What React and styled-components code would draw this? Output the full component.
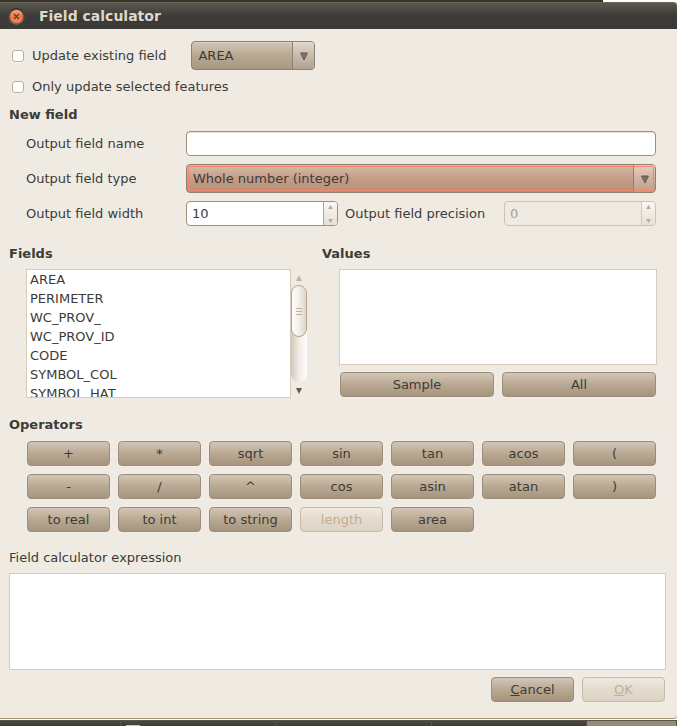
import React from "react";
import styled, { createGlobalStyle, css } from "styled-components";

const ink = "#3c3b37";
const paper = "#efebe3";
const edge = "#a09078";
const paleEdge = "#d6ccb9";

const GlobalStyle = createGlobalStyle`
  *, *::before, *::after { box-sizing: border-box; }
  body {
    margin: 0;
    background: ${paper};
    color: ${ink};
    font: 13px/16px "DejaVu Sans", sans-serif;
  }
  button, input, select, textarea {
    margin: 0;
    font: inherit;
    color: inherit;
  }
`;

const Screen = styled.div`
  display: flex;
  flex-direction: column;
  min-height: 100vh;
`;

const Backdrop = styled.div`
  height: 2px;
  background: linear-gradient(to right, #34352f 89%, #ffffff 89%);
`;

const TitleBar = styled.header`
  display: flex;
  align-items: center;
  gap: 14px;
  height: 27px;
  padding-left: 8px;
  border-top: 1px solid #6d6454;
  border-top-right-radius: 4px;
  background: linear-gradient(#5a5952, #3c3b37 50%, #3b3a36);
`;

const CloseButton = styled.button`
  display: flex;
  width: 17px;
  height: 17px;
  padding: 0;
  border: 0;
  background: none;
`;

const Title = styled.h1`
  margin: 0;
  font-size: 14px;
  line-height: 16px;
  color: #dfd8c8;
`;

const Body = styled.main`
  display: flex;
  flex: 1;
  flex-direction: column;
  padding: 12px 11px 16px 9px;
  border-bottom: 1px solid #a3966f;
  border-bottom-right-radius: 4px;
`;

const CheckRow = styled.div`
  display: flex;
  align-items: center;
  margin-bottom: 9px;
`;

const CheckLabel = styled.label`
  display: flex;
  align-items: center;
  gap: 8px;
  padding-left: 3px;
`;

const CheckBox = styled.input`
  appearance: none;
  width: 12px;
  height: 12px;
  border: 1px solid #bcae98;
  border-radius: 3px;
  background: #ffffff;
  box-shadow: 0 1px 0 #f8f5f0;
`;

const Heading = styled.h2`
  margin: ${(p) => (p.$first ? "3px" : "0")} 0 ${(p) => (p.$tight ? "7px" : "8px")};
  font-size: 13px;
  line-height: 16px;
`;

const FormGrid = styled.div`
  display: grid;
  grid-template-columns: 160px 1fr 166px 1fr;
  align-items: center;
  row-gap: 8px;
  margin: 0 10px 20px 17px;
`;

const FieldLabel = styled.label`
  padding-left: ${(p) => (p.$inner ? "7px" : "0")};
`;

const TextInput = styled.input`
  grid-column: span 3;
  width: 100%;
  height: 25px;
  padding: 0 6px;
  border: 1px solid ${edge};
  border-radius: 4px;
  background: #ffffff;
  box-shadow: inset 0 1px 0 #e6e1d9;
`;

const wideCombo = css`
  grid-column: span 3;
  background: linear-gradient(#dbb9a9, #c49d88 50%, #b98f76);
  outline: 1px solid #f4866c;
  outline-offset: -3px;
`;

const compactCombo = css`
  width: 124px;
  margin-left: 25px;
  background: linear-gradient(#d2c6b7, #b8a892 50%, #a89680);
  box-shadow: inset 0 1px 0 #ddd2c4;
`;

const ComboBox = styled.div`
  display: grid;
  grid-template-columns: 1fr 22px;
  height: 29px;
  border: 1px solid #8f8170;
  border-radius: 4px;
  ${(p) => (p.$wide ? wideCombo : compactCombo)}
`;

const ComboSelect = styled.select`
  appearance: none;
  grid-area: 1 / 1 / 2 / 3;
  min-width: 0;
  padding: 0 22px 0 6px;
  border: 0;
  background: transparent;
  outline: 0;
`;

const ComboArrow = styled.span`
  display: flex;
  grid-area: 1 / 2;
  align-items: center;
  justify-content: center;
  padding-top: 2px;
  border-left: 1px solid #8f8170;
  background: linear-gradient(rgba(255, 255, 255, 0.3), rgba(255, 255, 255, 0.12));
  pointer-events: none;
`;

const SpinBox = styled.div`
  display: grid;
  grid-template-columns: 1fr 14px;
  height: 25px;
  border: 1px solid ${(p) => (p.$off ? "#cfc3ae" : edge)};
  border-radius: 4px;
  background: ${(p) => (p.$off ? paper : "#ffffff")};
  overflow: hidden;
`;

const SpinInput = styled.input`
  appearance: textfield;
  min-width: 0;
  padding: 0 5px;
  border: 0;
  background: transparent;
  &::-webkit-inner-spin-button { appearance: none; margin: 0; }
  &:disabled { color: #a5a199; }
`;

const Steppers = styled.div`
  display: flex;
  flex-direction: column;
  justify-content: space-between;
  padding: 3px 0 2px;
  border-left: 1px solid ${(p) => (p.$off ? "#d3c8b6" : "#b5a78f")};
  background: linear-gradient(#faf8f5, #e7e0d5);
`;

const Stepper = styled.button`
  display: flex;
  justify-content: center;
  padding: 0;
  border: 0;
  background: none;
  color: #b9ab97;
  &:disabled { color: #b9ab97; }
`;

const Lists = styled.div`
  display: grid;
  grid-template-columns: 298fr 335fr;
  column-gap: 15px;
  margin: 0 9px 19px 0;
`;

const Column = styled.section`
  display: flex;
  flex-direction: column;
`;

const ListArea = styled.div`
  display: flex;
  height: 129px;
  margin-left: 17px;
`;

const List = styled.ul`
  flex: 1;
  margin: 0;
  padding: 0 3px;
  border: 1px solid ${paleEdge};
  background: #ffffff;
  list-style: none;
  overflow: hidden;
`;

const ListItem = styled.li`
  line-height: 19px;
`;

const ValueList = styled(List)`
  margin-left: 17px;
`;

const ScrollBar = styled.div`
  display: flex;
  flex-direction: column;
  width: 16px;
`;

const ScrollButton = styled.button`
  display: flex;
  align-items: center;
  justify-content: center;
  height: 16px;
  padding: 1px 0 0;
  border: 0;
  background: none;
  color: ${(p) => (p.disabled ? "#c2b49f" : "#5f5b53")};
`;

const Trough = styled.div`
  flex: 1;
  border-radius: 8px;
  background: linear-gradient(to right, #d2c8ba, #f0ece6 50%, #ffffff);
`;

const Thumb = styled.div`
  display: flex;
  flex-direction: column;
  align-items: center;
  justify-content: center;
  gap: 2px;
  height: 52px;
  border: 1px solid #b5a58c;
  border-radius: 8px;
  background: linear-gradient(to right, #ffffff, #f3efea 45%, #dfd6c9);
`;

const Grip = styled.span`
  width: 6px;
  height: 1px;
  background: #bfb19c;
`;

const ValueButtons = styled.div`
  display: grid;
  grid-template-columns: 1fr 1fr;
  gap: 8px;
  margin: 7px 1px 1px 18px;
`;

const offButton = css`
  border-color: #c5b8a5;
  background: linear-gradient(#efe9e0, #e4dbce 50%, #ddd3c5);
  color: #bfae94;
`;

const PushButton = styled.button`
  height: 25px;
  padding: 0 4px;
  border: 1px solid #9c8c77;
  border-radius: 4px;
  background: linear-gradient(#d2c6b7, #b9a993 50%, #a6947d);
  box-shadow: 0 0 0 1px #f2eee7;
  line-height: 16px;
  &:disabled { ${offButton} }
`;

const Operators = styled.div`
  display: grid;
  grid-template-columns: repeat(7, 1fr);
  gap: 8px;
  margin: 0 10px 18px 18px;
`;

const ExpressionLabel = styled.label`
  margin-bottom: 7px;
`;

const Expression = styled.textarea`
  flex: 1;
  min-height: 97px;
  padding: 4px;
  border: 1px solid ${paleEdge};
  background: #ffffff;
  resize: none;
  outline: 0;
`;

const DialogActions = styled.footer`
  display: grid;
  grid-template-columns: 83px 83px;
  gap: 8px;
  justify-content: end;
  margin: 7px 1px 0 0;
`;

const TaskBar = styled.div`
  display: grid;
  grid-template-columns: 121fr 155fr 156fr 155fr 90fr;
  height: 7px;
  border-top: 1px solid #fbf9f5;
  background: #3f3e39;
`;

const Task = styled.span`
  display: flex;
  align-items: flex-end;
  padding-left: 5px;
  border-top: 1px solid #55534c;
  border-right: 1px solid #57554e;
  border-top-right-radius: 2px;
  background: ${(p) => (p.$active ? "#9a8a74" : "linear-gradient(#4a4943, #3d3c37)")};
`;

const TaskIcon = styled.span`
  width: 14px;
  height: 1px;
  background: #c9c7c2;
`;

const CloseIcon = () => (
  <svg width="17" height="17" viewBox="0 0 17 17" aria-hidden="true">
    <defs>
      <linearGradient id="closeFill" x1="0" y1="0" x2="0" y2="1">
        <stop offset="0" stopColor="#f9a583" />
        <stop offset="0.5" stopColor="#f07746" />
        <stop offset="1" stopColor="#f58a58" />
      </linearGradient>
      <linearGradient id="closeRing" x1="0" y1="0" x2="0" y2="1">
        <stop offset="0" stopColor="#24231f" />
        <stop offset="1" stopColor="#77756d" />
      </linearGradient>
    </defs>
    <circle cx="8.5" cy="8.5" r="8.2" fill="url(#closeRing)" />
    <circle cx="8.5" cy="8.5" r="6.9" fill="url(#closeFill)" stroke="#7d3a24" strokeWidth="0.6" />
    <path d="M6 6l5 5M11 6l-5 5" stroke="#5b3a2c" strokeWidth="1.1" />
  </svg>
);

const ComboIcon = () => (
  <svg width="8" height="9" viewBox="0 0 8 9" aria-hidden="true">
    <path d="M0.6 1h6.8L4 8z" fill="#7e7568" stroke="#5d574e" />
  </svg>
);

const Arrow = ({ down, small }) => (
  <svg width={small ? 5 : 6} height={small ? 4 : 6} viewBox="0 0 6 6" preserveAspectRatio="none" aria-hidden="true">
    <path d={down ? "M0 0h6L3 6z" : "M0 6h6L3 0z"} fill="currentColor" />
  </svg>
);

const Spin = ({ id, value, disabled }) => (
  <SpinBox $off={disabled}>
    <SpinInput id={id} type="number" defaultValue={value} disabled={disabled} />
    <Steppers $off={disabled}>
      <Stepper type="button" aria-label="Increase" disabled={disabled}>
        <Arrow small />
      </Stepper>
      <Stepper type="button" aria-label="Decrease" disabled={disabled}>
        <Arrow small down />
      </Stepper>
    </Steppers>
  </SpinBox>
);

const fields = ["AREA", "PERIMETER", "WC_PROV_", "WC_PROV_ID", "CODE", "SYMBOL_COL", "SYMBOL_HAT"];

const operators = [
  "+", "*", "sqrt", "sin", "tan", "acos", "(",
  "-", "/", "^", "cos", "asin", "atan", ")",
  "to real", "to int", "to string", "length", "area",
];

export default function App() {
  return (
    <Screen>
      <GlobalStyle />
      <Backdrop />
      <TitleBar>
        <CloseButton type="button" aria-label="Close">
          <CloseIcon />
        </CloseButton>
        <Title>Field calculator</Title>
      </TitleBar>
      <Body>
        <CheckRow>
          <CheckLabel>
            <CheckBox type="checkbox" />
            Update existing field
          </CheckLabel>
          <ComboBox>
            <ComboSelect aria-label="Existing field">
              <option>AREA</option>
            </ComboSelect>
            <ComboArrow>
              <ComboIcon />
            </ComboArrow>
          </ComboBox>
        </CheckRow>
        <CheckRow>
          <CheckLabel>
            <CheckBox type="checkbox" />
            Only update selected features
          </CheckLabel>
        </CheckRow>

        <Heading $first>New field</Heading>
        <FormGrid>
          <FieldLabel htmlFor="name">Output field name</FieldLabel>
          <TextInput id="name" type="text" />
          <FieldLabel htmlFor="type">Output field type</FieldLabel>
          <ComboBox $wide>
            <ComboSelect id="type">
              <option>Whole number (integer)</option>
            </ComboSelect>
            <ComboArrow>
              <ComboIcon />
            </ComboArrow>
          </ComboBox>
          <FieldLabel htmlFor="width">Output field width</FieldLabel>
          <Spin id="width" value="10" />
          <FieldLabel htmlFor="precision" $inner>Output field precision</FieldLabel>
          <Spin id="precision" value="0" disabled />
        </FormGrid>

        <Lists>
          <Column>
            <Heading $tight>Fields</Heading>
            <ListArea>
              <List>
                {fields.map((field) => (
                  <ListItem key={field}>{field}</ListItem>
                ))}
              </List>
              <ScrollBar>
                <ScrollButton type="button" aria-label="Scroll up" disabled>
                  <Arrow />
                </ScrollButton>
                <Trough>
                  <Thumb>
                    <Grip />
                    <Grip />
                    <Grip />
                  </Thumb>
                </Trough>
                <ScrollButton type="button" aria-label="Scroll down">
                  <Arrow down />
                </ScrollButton>
              </ScrollBar>
            </ListArea>
          </Column>
          <Column>
            <Heading $tight>Values</Heading>
            <ValueList />
            <ValueButtons>
              <PushButton type="button">Sample</PushButton>
              <PushButton type="button">All</PushButton>
            </ValueButtons>
          </Column>
        </Lists>

        <Heading>Operators</Heading>
        <Operators>
          {operators.map((name) => (
            <PushButton key={name} type="button" disabled={name === "length"}>
              {name}
            </PushButton>
          ))}
        </Operators>

        <ExpressionLabel htmlFor="expression">Field calculator expression</ExpressionLabel>
        <Expression id="expression" />
        <DialogActions>
          <PushButton type="button">
            <u>C</u>ancel
          </PushButton>
          <PushButton type="button" disabled>
            <u>O</u>K
          </PushButton>
        </DialogActions>
      </Body>
      <TaskBar>
        <Task />
        <Task>
          <TaskIcon />
        </Task>
        <Task />
        <Task />
        <Task $active />
      </TaskBar>
    </Screen>
  );
}
